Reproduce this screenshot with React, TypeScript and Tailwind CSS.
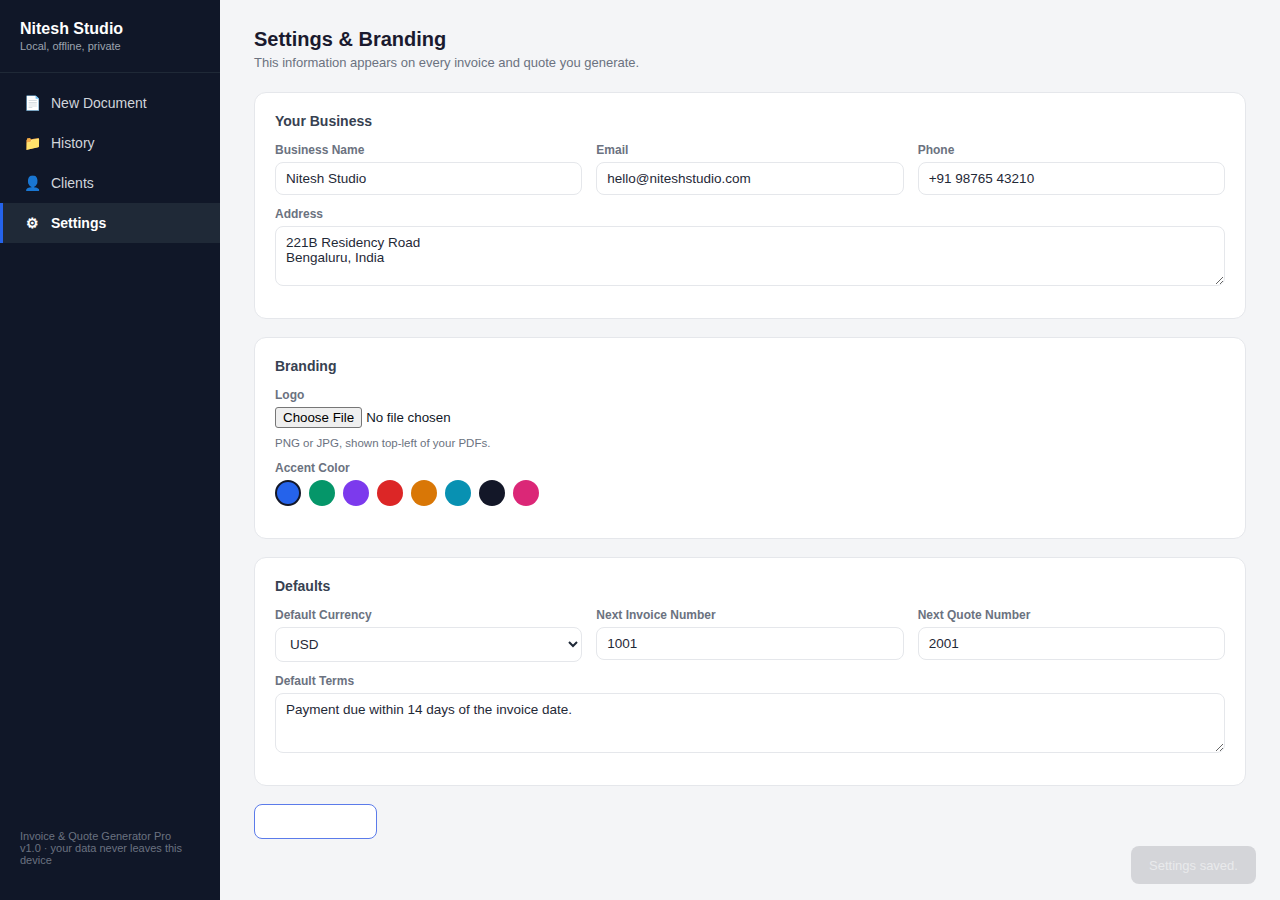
import type { ReactNode } from "react";

const font = "font-['Liberation_Sans',Arial,sans-serif]";
const inputClass =
  "w-full h-[33px] rounded-lg border border-[#e5e7eb] bg-white px-[10px] text-[13.5px] text-[#1f2937] outline-none";
const areaClass =
  "block w-full h-[60px] rounded-lg border border-[#e5e7eb] bg-white px-[10px] py-[8px] text-[13.5px] leading-[15px] text-[#1f2937] outline-none";

const navItems = [
  { icon: "📄", label: "New Document" },
  { icon: "📁", label: "History" },
  { icon: "👤", label: "Clients" },
  { icon: "⚙", label: "Settings", active: true },
];

const accents = ["#2563eb", "#059669", "#7c3aed", "#dc2626", "#d97706", "#0891b2", "#131728", "#db2777"];

function Sidebar() {
  return (
    <aside className="flex h-[900px] w-[220px] shrink-0 flex-col bg-[#101728]">
      <div className="h-[73px] border-b border-[#1f2937] px-5 pt-[20px]">
        <div className="text-[16px] font-bold leading-[18px] text-white">Nitesh Studio</div>
        <div className="mt-[1px] text-[11px] leading-[14px] text-[#9ca3af]">Local, offline, private</div>
      </div>
      <nav className="flex flex-col pt-[10px]">
        {navItems.map((item) => (
          <a
            key={item.label}
            className={
              item.active
                ? "flex h-10 items-center gap-[11px] border-l-[3px] border-[#2563eb] bg-[#1f2937] pl-[21px] text-sm font-semibold text-white"
                : "flex h-10 items-center gap-[11px] border-l-[3px] border-transparent pl-[21px] text-sm text-[#d1d5db]"
            }
          >
            <span className="w-4 text-center text-sm">{item.icon}</span>
            {item.label}
          </a>
        ))}
      </nav>
      <div className="mt-auto px-5 pb-[34px] text-[11px] leading-[12px] text-[#6b7280]">
        Invoice &amp; Quote Generator Pro
        <br />
        v1.0 · your data never leaves this device
      </div>
    </aside>
  );
}

function Card({ title, children }: { title: string; children: ReactNode }) {
  return (
    <section className="mb-[18px] rounded-xl border border-[#e5e7eb] bg-white px-5 pb-[19px] pt-[19px]">
      <h2 className="mb-[13px] text-[14px] font-semibold leading-[18px] text-[#374151]">{title}</h2>
      {children}
    </section>
  );
}

function Field({ label, children }: { label: string; children: ReactNode }) {
  return (
    <label className="block min-w-0">
      <span className="mb-[5px] block text-[12px] font-semibold leading-[14px] text-[#6b7280]">{label}</span>
      {children}
    </label>
  );
}

export default function App() {
  return (
    <div className={`${font} flex h-[900px] overflow-hidden bg-[#f4f5f7]`}>
      <Sidebar />
      <main className="relative flex-1 px-[34px] pt-[26px]">
        <h1 className="text-[20px] font-bold leading-[26px] text-[#1a1a2e]">Settings &amp; Branding</h1>
        <p className="mb-[21px] mt-[3px] text-[13px] leading-[16px] text-[#6b7280]">
          This information appears on every invoice and quote you generate.
        </p>

        <Card title="Your Business">
          <div className="grid grid-cols-3 gap-[14px]">
            <Field label="Business Name">
              <input className={inputClass} defaultValue="Nitesh Studio" />
            </Field>
            <Field label="Email">
              <input className={inputClass} defaultValue="hello@niteshstudio.com" />
            </Field>
            <Field label="Phone">
              <input className={inputClass} defaultValue="+91 98765 43210" />
            </Field>
          </div>
          <div className="mt-[12px] pb-[13px]">
            <Field label="Address">
              <textarea className={areaClass} defaultValue={"221B Residency Road\nBengaluru, India"} />
            </Field>
          </div>
        </Card>

        <Card title="Branding">
          <Field label="Logo">
            <input
              type="file"
              className="block text-[13.33px] text-[#111827] file:mr-[4px] file:h-[21px] file:rounded-[3px] file:border file:border-[#767676] file:bg-[#efefef] file:px-[7px] file:text-[13.33px] file:text-black"
            />
          </Field>
          <p className="mt-[8px] text-[11.5px] leading-[14px] text-[#6b7280]">PNG or JPG, shown top-left of your PDFs.</p>
          <div className="mt-[11px] pb-[13px]">
            <span className="mb-[5px] block text-[12px] font-semibold leading-[14px] text-[#6b7280]">Accent Color</span>
            <div className="flex gap-2">
              {accents.map((c, i) => (
                <span
                  key={c}
                  className={
                    i === 0
                      ? "h-[26px] w-[26px] rounded-full border-2 border-[#131728]"
                      : "h-[26px] w-[26px] rounded-full"
                  }
                  style={{ backgroundColor: c }}
                />
              ))}
            </div>
          </div>
        </Card>

        <Card title="Defaults">
          <div className="grid grid-cols-3 gap-[14px]">
            <Field label="Default Currency">
              <select className="h-[35px] w-full rounded-lg border border-[#e5e7eb] bg-white px-[10px] text-[13.5px] text-[#1f2937] outline-none">
                <option>USD</option>
              </select>
            </Field>
            <Field label="Next Invoice Number">
              <input className={inputClass} defaultValue="1001" />
            </Field>
            <Field label="Next Quote Number">
              <input className={inputClass} defaultValue="2001" />
            </Field>
          </div>
          <div className="mt-[12px] pb-[13px]">
            <Field label="Default Terms">
              <textarea className={areaClass} defaultValue="Payment due within 14 days of the invoice date." />
            </Field>
          </div>
        </Card>

        <button className="block h-[35px] w-[123px] rounded-lg border border-[#5b7bea] bg-white" aria-label="Save Settings" />

        <div className="absolute bottom-[16px] right-[24px] flex h-[38px] w-[125px] items-center justify-center rounded-lg bg-[#d4d5d9] pt-[1px] text-[13px] text-[#e9eaec]">
          Settings saved.
        </div>
      </main>
    </div>
  );
}
